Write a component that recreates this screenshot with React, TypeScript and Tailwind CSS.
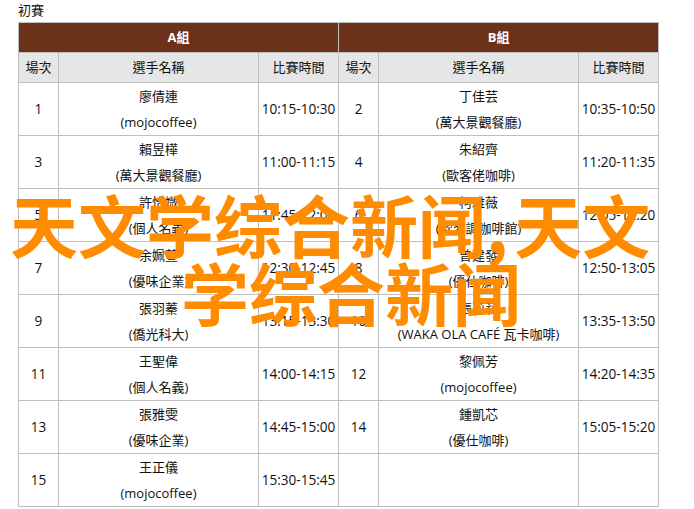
const rowsA = [
  ["1", "廖倩連", "(mojocoffee)", "10:15-10:30"],
  ["3", "賴昱樺", "(萬大景觀餐廳)", "11:00-11:15"],
  ["5", "許怡媺", "(個人名義)", "11:45-12:00"],
  ["7", "余姵萱", "(優味企業)", "12:30-12:45"],
  ["9", "張羽蓁", "(僑光科大)", "13:15-13:30"],
  ["11", "王聖偉", "(個人名義)", "14:00-14:15"],
  ["13", "張雅雯", "(優味企業)", "14:45-15:00"],
  ["15", "王正儀", "(mojocoffee)", "15:30-15:45"],
];

const rowsB = [
  ["2", "丁佳芸", "(萬大景觀餐廳)", "10:35-10:50"],
  ["4", "朱紹齊", "(歐客佬咖啡)", "11:20-11:35"],
  ["6", "柯雅薇", "(歐客調咖啡館)", "12:05-12:20"],
  ["8", "曾建發", "(優仕咖啡)", "12:50-13:05"],
  ["10", "張莉莉", "(WAKA OLA CAFÉ 瓦卡咖啡)", "13:35-13:50"],
  ["12", "黎佩芳", "(mojocoffee)", "14:20-14:35"],
  ["14", "鍾凱芯", "(優仕咖啡)", "15:05-15:20"],
  ["", "", "", ""],
];

const cell = "border border-[#bfbfbf] p-0 text-center align-middle";
const numCell = `${cell} text-[13.6px]`;

const App = () => {
  return (
    <div className="relative h-[509px] w-[694px] overflow-hidden bg-white font-['Open_Sans','Noto_Sans_CJK_TC',sans-serif] text-[13px] text-[#111]">
      <div className="pl-[18px]">
        <p className="h-[22px] leading-[21px]">初賽</p>
        <table className="w-[641px] table-fixed border-collapse">
          <colgroup>
            <col className="w-[40px]" />
            <col className="w-[200px]" />
            <col className="w-[80px]" />
            <col className="w-[40px]" />
            <col className="w-[200px]" />
            <col className="w-[80px]" />
          </colgroup>
          <thead>
            {/* Group header */}
            <tr className="h-[30px] bg-[#6b3119] font-bold text-white">
              <th colSpan={3} className={cell}>A組</th>
              <th colSpan={3} className={cell}>B組</th>
            </tr>
            <tr className="h-[30px] bg-[#e6e6e6]">
              <th className={`${cell} font-normal`}>場次</th>
              <th className={`${cell} font-normal`}>選手名稱</th>
              <th className={`${cell} font-normal`}>比賽時間</th>
              <th className={`${cell} font-normal`}>場次</th>
              <th className={`${cell} font-normal`}>選手名稱</th>
              <th className={`${cell} font-normal`}>比賽時間</th>
            </tr>
          </thead>
          <tbody>
            {rowsA.map((a, i) => {
              const b = rowsB[i];
              return (
                <tr key={a[0]} className="h-[53px]">
                  <td className={numCell}>{a[0]}</td>
                  <td className={`${cell} leading-[26px]`}>
                    <div>{a[1]}</div>
                    <div>{a[2]}</div>
                  </td>
                  <td className={numCell}>{a[3]}</td>
                  <td className={numCell}>{b[0]}</td>
                  <td className={`${cell} leading-[26px]`}>
                    <div>{b[1]}</div>
                    <div>{b[2]}</div>
                  </td>
                  <td className={numCell}>{b[3]}</td>
                </tr>
              );
            })}
          </tbody>
        </table>
      </div>

      {/* Orange overlay text */}
      <div className="absolute left-0 top-[190px] w-full font-['Noto_Sans_CJK_SC',sans-serif] text-[68px] font-bold leading-[68px] text-[#ff8c00]">
        <div className="pl-[10px]">
          天文学综合新闻<span className="pr-[6px]">,</span>天文
        </div>
        <div className="pl-[181px]">学综合新闻</div>
      </div>
    </div>
  );
};

export default App;
